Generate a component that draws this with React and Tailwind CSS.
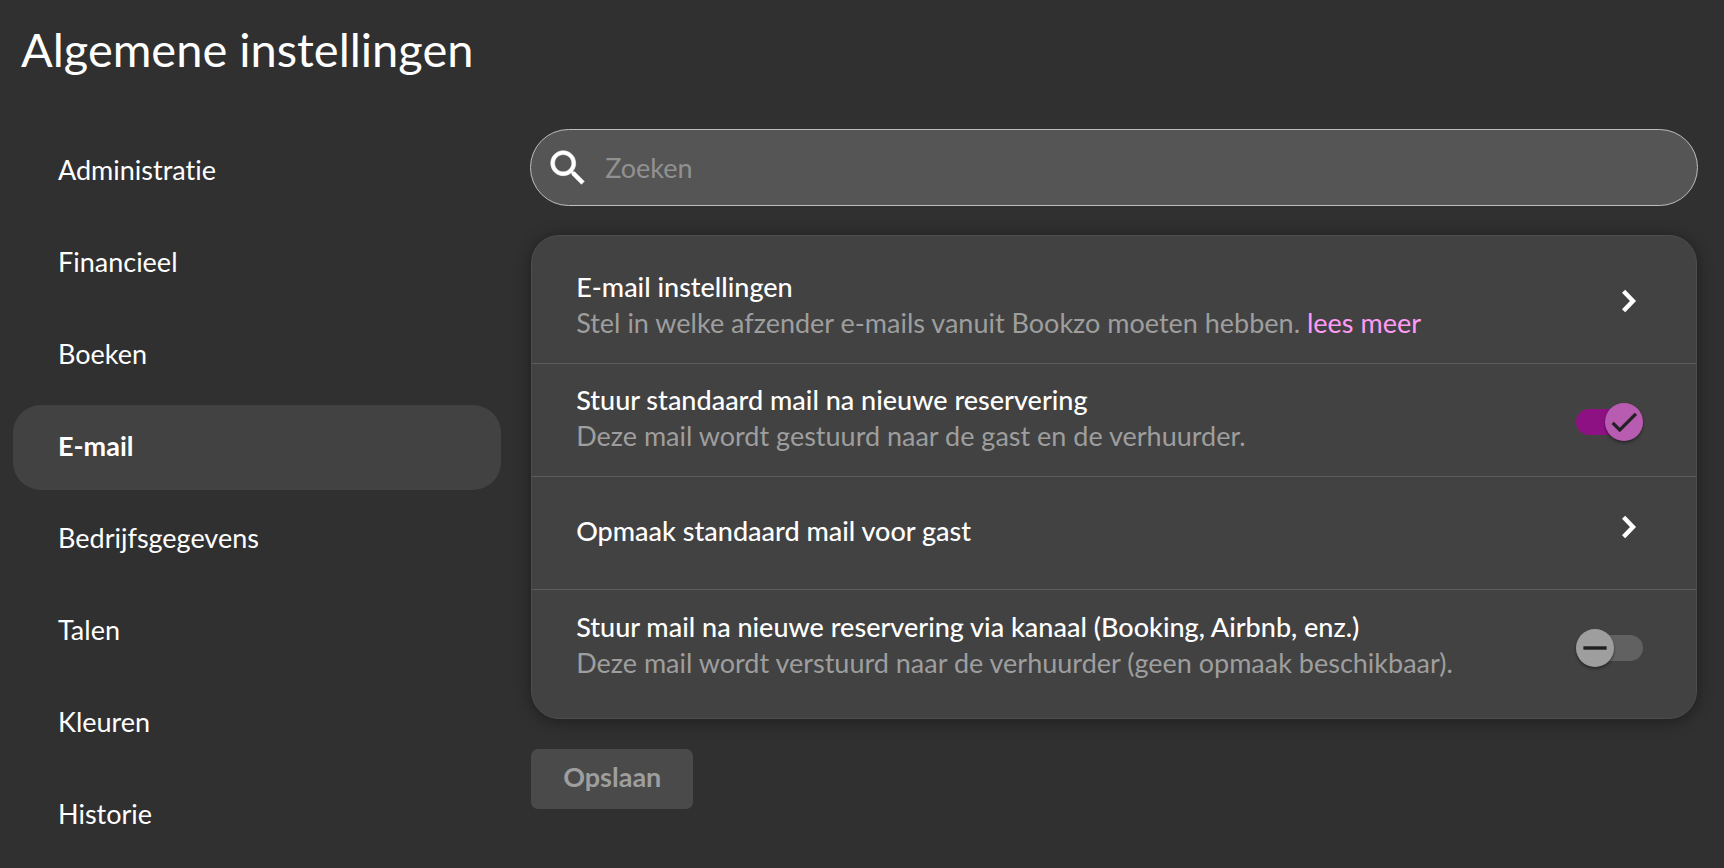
import React, { useState } from 'react';

const menuItems = ['Administratie', 'Financieel', 'Boeken', 'E-mail', 'Bedrijfsgegevens', 'Talen', 'Kleuren', 'Historie'];

const SearchIcon = () => (
  <svg viewBox="0 0 24 24" className="w-[46px] h-[46px] shrink-0 fill-white stroke-white" strokeWidth="0.3" aria-hidden="true">
    <path d="M15.5 14h-.79l-.28-.27C15.41 12.59 16 11.11 16 9.5 16 5.91 13.09 3 9.5 3S3 5.91 3 9.5 5.91 16 9.5 16c1.61 0 3.09-.59 4.23-1.57l.27.28v.79l5 4.99L20.49 19l-4.99-5zm-6 0C7.01 14 5 11.99 5 9.5S7.01 5 9.5 5 14 7.01 14 9.5 11.99 14 9.5 14z" />
  </svg>
);

const ChevronIcon = () => (
  <svg viewBox="0 0 46 46" className="w-[46px] h-[46px] fill-none stroke-white" strokeWidth="4.4" aria-hidden="true">
    <path d="M18.6 13.2 28 23 18.6 32.8" />
  </svg>
);

// One line in the settings card, the control sits on the right
const SettingRow = ({ title, htmlFor, description, children }) => (
  <li className="flex items-center justify-between gap-6 h-[113px] pl-11 pr-[53px] border-b border-[#5c5c5c] last:border-b-0">
    <div className="pb-1 text-[27px] leading-9">
      {htmlFor ? (
        <label htmlFor={htmlFor} className="block font-medium text-white">{title}</label>
      ) : (
        <h2 className="font-medium text-white">{title}</h2>
      )}
      {description && <p className="text-[#9e9e9e]">{description}</p>}
    </div>
    {children}
  </li>
);

const Toggle = ({ id, checked, onChange }) => (
  <span className="relative flex items-center w-[67px] h-[38px] mt-[3px] shrink-0">
    <input
      type="checkbox"
      role="switch"
      id={id}
      checked={checked}
      onChange={(e) => onChange(e.target.checked)}
      className="appearance-none w-full h-[26px] rounded-full bg-[#616161] checked:bg-[#8e1184] cursor-pointer"
    />
    <span
      className={`absolute top-0 flex items-center justify-center w-[38px] h-[38px] rounded-full shadow-[0_2px_3px_rgba(0,0,0,0.4)] pointer-events-none ${
        checked ? 'right-0 bg-[#b75cb0]' : 'left-0 bg-[#9e9e9e]'
      }`}
    >
      <svg viewBox="0 0 24 24" className="w-[34px] h-[34px] fill-[#212121] stroke-[#212121]" strokeWidth="0.4" aria-hidden="true">
        {checked ? (
          <path d="M9 16.2 4.8 12l-1.4 1.4L9 19 21 7l-1.4-1.4L9 16.2z" />
        ) : (
          <path d="M4 11h16v2H4z" />
        )}
      </svg>
    </span>
  </span>
);

const App = () => {
  const [active, setActive] = useState('E-mail');
  const [search, setSearch] = useState('');
  const [guestMail, setGuestMail] = useState(true);
  const [channelMail, setChannelMail] = useState(false);

  return (
    <div className="min-h-screen bg-[#303030] text-white font-[Lato,sans-serif] [font-variant-ligatures:none]">
      <h1 className="px-[21px] pt-[21px] text-[47px] leading-[56px]">Algemene instellingen</h1>

      <div className="flex items-start mt-[52px]">
        {/* Side menu */}
        <nav className="w-[30%] shrink-0 pl-[13px] pr-4" aria-label="Instellingen">
          <ul className="flex flex-col gap-[7px]">
            {menuItems.map((item) => (
              <li key={item}>
                <a
                  href="#"
                  onClick={() => setActive(item)}
                  aria-current={item === active ? 'page' : undefined}
                  className={`flex items-center h-[85px] px-[45px] pb-1 rounded-[28px] text-[27px] leading-9 ${
                    item === active ? 'bg-[#424242] font-bold' : ''
                  }`}
                >
                  {item}
                </a>
              </li>
            ))}
          </ul>
        </nav>

        <main className="flex-1 min-w-0 pl-[13px] pr-[26px]">
          <div className="flex items-center gap-[14px] h-[77px] pl-[14px] pr-8 rounded-full border border-[#bdbdbd] bg-[#555555]">
            <SearchIcon />
            <input
              type="text"
              value={search}
              onChange={(e) => setSearch(e.target.value)}
              placeholder="Zoeken"
              aria-label="Zoeken"
              className="flex-1 min-w-0 h-full bg-transparent text-[27px] leading-9 placeholder:text-[#919191] outline-none"
            />
          </div>

          <ul className="mt-[29px] mx-px py-[15px] rounded-[28px] border border-[#4d4d4d] bg-[#424242] shadow-[0_2px_16px_rgba(0,0,0,0.4)]">
            <SettingRow
              title="E-mail instellingen"
              description={
                <>
                  Stel in welke afzender e-mails vanuit Bookzo moeten hebben.{' '}
                  <a href="#" className="text-[#ff9bf5]">lees meer</a>
                </>
              }
            >
              <button type="button" aria-label="E-mail instellingen" className="-mr-2 mb-3">
                <ChevronIcon />
              </button>
            </SettingRow>
            <SettingRow
              htmlFor="gast-mail"
              title="Stuur standaard mail na nieuwe reservering"
              description="Deze mail wordt gestuurd naar de gast en de verhuurder."
            >
              <Toggle id="gast-mail" checked={guestMail} onChange={setGuestMail} />
            </SettingRow>
            <SettingRow title="Opmaak standaard mail voor gast">
              <button type="button" aria-label="Opmaak standaard mail voor gast" className="-mr-2 mb-3">
                <ChevronIcon />
              </button>
            </SettingRow>
            <SettingRow
              htmlFor="kanaal-mail"
              title="Stuur mail na nieuwe reservering via kanaal (Booking, Airbnb, enz.)"
              description="Deze mail wordt verstuurd naar de verhuurder (geen opmaak beschikbaar)."
            >
              <Toggle id="kanaal-mail" checked={channelMail} onChange={setChannelMail} />
            </SettingRow>
          </ul>

          <button type="button" disabled className="mt-[30px] mx-px h-[60px] px-8 pb-1 rounded-[7px] bg-[#4a4a4a] text-[27px] leading-9 font-bold text-[#9e9e9e]">
            Opslaan
          </button>
        </main>
      </div>
    </div>
  );
};

export default App;
